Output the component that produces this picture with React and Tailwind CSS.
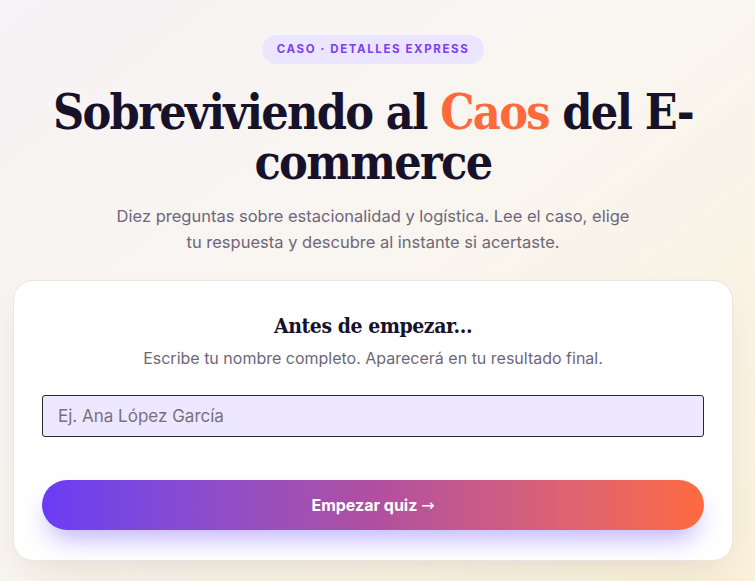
export default function App() {
  return (
    <div className="min-h-screen w-full bg-gradient-to-br from-[#f7f3f6] via-[#f9f5ef] to-[#fbf1da] font-['Inter','Noto_Sans',sans-serif]">
      <div className="pt-[35px] pl-[13px] pr-[22px] pb-6 flex flex-col items-center">
        {/* badge */}
        <span className="inline-flex items-center h-[29px] px-[15px] rounded-full bg-[#ece5ff] text-[#7b3ff0] text-[11.5px] font-bold tracking-[0.14em] uppercase">
          Caso · Detalles Express
        </span>

        <h1 className="mt-[23px] w-[680px] text-center text-[#17122a] font-['DejaVu_Serif_Condensed','DejaVu_Serif',serif] font-bold text-[48px] leading-[50px] tracking-[-0.035em]">
          Sobreviviendo al <span className="text-[#ff6a3d]">Caos</span> del E-commerce
        </h1>

        <p className="mt-[16px] w-[520px] text-center text-[#6e6779] text-[16.5px] leading-[26px]">
          Diez preguntas sobre estacionalidad y logística. Lee el caso, elige
          <br />
          tu respuesta y descubre al instante si acertaste.
        </p>

        {/* card */}
        <div className="mt-[25px] w-full bg-white border border-[#ece6df] rounded-[20px] shadow-[0_18px_40px_-12px_rgba(60,40,20,0.12)] px-[28px] pt-[30px] pb-[30px]">
          <h2 className="text-center text-[#17122a] font-['DejaVu_Serif_Condensed','DejaVu_Serif',serif] font-bold text-[21px] leading-[30px] tracking-[-0.02em]">
            Antes de empezar...
          </h2>
          <p className="mt-[6px] text-center text-[#6e6779] text-[16px] leading-[22px]">
            Escribe tu nombre completo. Aparecerá en tu resultado final.
          </p>

          <input
            type="text"
            placeholder="Ej. Ana López García"
            className="mt-[26px] block w-full h-[42px] px-[15px] rounded-[3px] border border-[#2b2733] bg-[#ede8ff] text-[17px] text-[#17122a] placeholder:text-[#77707f] outline-none"
          />

          <button className="mt-[43px] w-full h-[50px] rounded-full bg-gradient-to-r from-[#6a3bf5] via-[#b04fa0] to-[#ff6a3d] text-white font-bold text-[16px] shadow-[0_14px_26px_-6px_rgba(110,80,255,0.45)]">
            Empezar quiz <span className="font-['DejaVu_Sans',sans-serif] font-normal">→</span>
          </button>
        </div>
      </div>
    </div>
  );
}
